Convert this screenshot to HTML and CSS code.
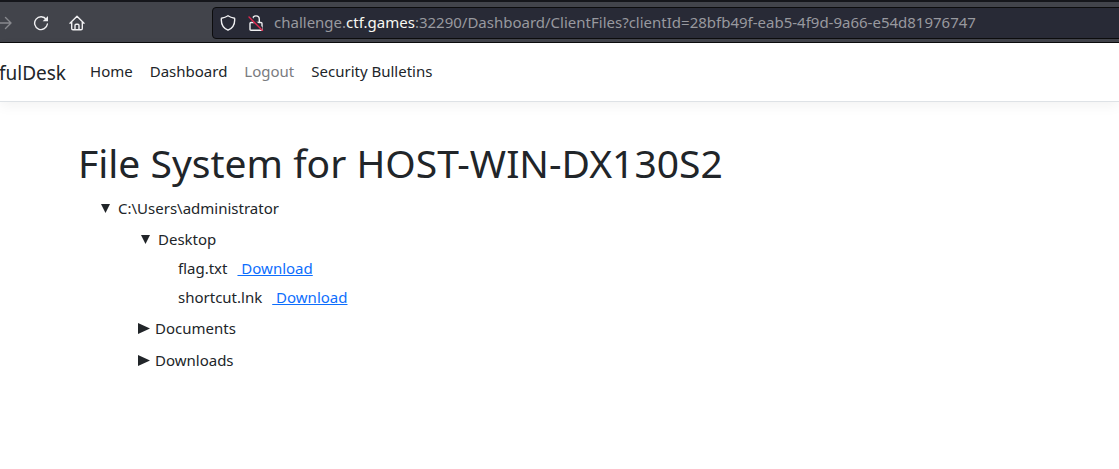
FILE: index.html
```html
<!DOCTYPE html>
<html lang="en">
<head>
<meta charset="utf-8">
<title>File System</title>
<link rel="stylesheet" href="styles.css">
</head>
<body>
<div class="toolbar">
  <button class="tool forward" aria-label="Forward"><svg viewBox="0 0 16 16"><path d="M1 8h13M8.500 2.500 14 8l-5.500 5.500"/></svg></button>
  <button class="tool" aria-label="Reload"><svg viewBox="0 0 16 16"><path d="M13.300 4.500A6.400 6.400 0 1 0 14.400 9"/><path class="solid" d="M15 1v5.300H9.700z"/></svg></button>
  <button class="tool" aria-label="Home page"><svg viewBox="0 0 16 16"><path d="M1 8.200 8 1.300l7 6.900M2.700 7v6.500q0 1.300 1.300 1.300h8q1.300 0 1.300-1.300V7M6 14.500v-4q0-1.200 1.200-1.200h1.600q1.200 0 1.200 1.200v4"/></svg></button>
  <div class="address">
    <svg viewBox="0 0 16 16"><path d="M8 .8c2 1.400 4 2 6.600 2.400.5 5-.8 9.500-6.600 12C2.200 12.700.900 8.200 1.400 3.200 4 2.800 6 2.200 8 .8z"/></svg>
    <svg viewBox="0 0 16 16"><path d="M4.700 4.200a3.300 3.300 0 0 1 6.600 0V7M3 7.500h10q1 0 1 1v5.700q0 1-1 1H3q-1 0-1-1V8.500q0-1 1-1z"/><path class="under" d="M3 3l10 10"/><path class="slash" d="M1 2l13.500 13.500"/></svg>
    <div class="url" role="textbox" contenteditable="true" spellcheck="false" aria-label="Address">challenge.<span class="domain">ctf.games</span>:32290/Dashboard/ClientFiles?clientId=28bfb49f-eab5-4f9d-9a66-e54d81976747</div>
  </div>
</div>
<header class="navbar">
  <a class="brand" href="#">fulDesk</a>
  <nav class="links">
    <a href="#">Home</a>
    <a href="#">Dashboard</a>
    <button class="logout">Logout</button>
    <a href="#">Security Bulletins</a>
  </nav>
</header>
<main class="content">
  <h1>File System for HOST-WIN-DX130S2</h1>
  <details class="root" open>
    <summary><svg class="caret" viewBox="0 0 12 12"><path class="down" d="M1 2h9L5.500 11z"/><path class="right" d="M0 1v11l12-5.500z"/></svg>C:\Users\administrator</summary>
    <div class="children">
      <details open>
        <summary><svg class="caret" viewBox="0 0 12 12"><path class="down" d="M1 2h9L5.500 11z"/><path class="right" d="M0 1v11l12-5.500z"/></svg>Desktop</summary>
        <ul class="files">
          <li>flag.txt <a href="#">&nbsp;Download</a></li>
          <li>shortcut.lnk <a href="#">&nbsp;Download</a></li>
        </ul>
      </details>
      <details>
        <summary><svg class="caret" viewBox="0 0 12 12"><path class="down" d="M1 2h9L5.500 11z"/><path class="right" d="M0 1v11l12-5.500z"/></svg>Documents</summary>
      </details>
      <details>
        <summary><svg class="caret" viewBox="0 0 12 12"><path class="down" d="M1 2h9L5.500 11z"/><path class="right" d="M0 1v11l12-5.500z"/></svg>Downloads</summary>
      </details>
    </div>
  </details>
</main>
</body>
</html>
```
FILE: styles.css
```css
* { box-sizing: border-box; }
body {
  margin: 0;
  overflow-x: hidden;
  background: #fff;
  color: #212529;
  font: 15px/24px "Noto Sans", sans-serif;
}
button { padding: 0; border: 0; background: none; font: inherit; }
.toolbar {
  display: flex;
  align-items: center;
  gap: 20px;
  height: 43px;
  padding-top: 1px;
  background: #42444b;
  border-top: 2px solid #15161b;
  border-bottom: 1px solid #0c0c0d;
}
.tool { flex: none; width: 16px; height: 16px; }
.tool.forward { margin-left: -3px; opacity: .4; }
.toolbar svg {
  display: block;
  flex: none;
  width: 16px;
  height: 16px;
  fill: none;
  stroke: #f0f0f2;
  stroke-width: 1.4;
  stroke-linecap: round;
  stroke-linejoin: round;
}
.toolbar .solid { fill: #f0f0f2; stroke: none; }
.toolbar .under { stroke: #282a36; stroke-width: 3; }
.toolbar .slash { stroke: #e22850; }
.address {
  display: flex;
  flex: 1;
  align-items: center;
  gap: 12px;
  min-width: 0;
  height: 32px;
  margin-left: 107px;
  margin-right: -8px;
  padding-left: 7px;
  background: #282a36;
  border: 1px solid #0c0c0d;
  border-radius: 4px;
}
.url {
  margin-left: -2px;
  padding-bottom: 2px;
  color: #98999f;
  white-space: nowrap;
  outline: 0;
}
.domain { color: #f8f8f2; }
.navbar {
  display: flex;
  align-items: center;
  gap: 24px;
  height: 59px;
  border-bottom: 1px solid #dee2e6;
  box-shadow: 0 4px 12px rgba(0, 0, 0, .05);
}
.navbar a { color: #212529; text-decoration: none; }
.navbar .brand { margin-left: -1px; padding-top: 2px; font-size: 19px; }
.links { display: flex; gap: 17px; padding-bottom: 2px; }
.logout { color: #7a7c7f; }
.content { padding: 37px 78px; }
h1 {
  margin: 0 0 5px;
  font-size: 39px;
  line-height: 48px;
  font-weight: 400;
}
.root { padding-left: 22px; }
summary {
  display: flex;
  align-items: center;
  gap: 6px;
  min-height: 31px;
  list-style: none;
  cursor: pointer;
}
.caret { width: 12px; height: 12px; fill: #212529; }
.right { display: none; }
details:not([open]) > summary .down { display: none; }
details:not([open]) > summary .right { display: inline; }
details:not([open]) > summary { min-height: 32px; gap: 5px; }
.children { padding-left: 38px; }
.children details[open] > summary { padding-left: 2px; }
.files { margin: 0; padding: 0 0 0 40px; list-style: none; }
.files li { display: flex; gap: 10px; line-height: 29px; }
.files a { color: #0d6efd; }
```
